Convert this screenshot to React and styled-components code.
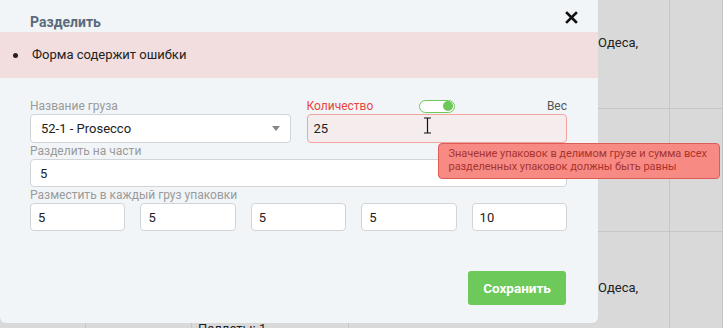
import React from 'react';
import styled, { createGlobalStyle } from 'styled-components';

const GlobalStyle = createGlobalStyle`
  html, body {
    margin: 0;
    padding: 0;
    overflow: hidden;
    background: #d9d9d9;
    font-family: Roboto, "Noto Sans", sans-serif;
  }
`;

const Page = styled.div`
  position: relative;
  width: 723px;
  height: 328px;
  overflow: hidden;
`;

/* table behind the dialog */
const Table = styled.div`
  display: grid;
  grid-template-columns: 86px 106px 157px 321px 1fr;
  grid-auto-rows: 123px;
  margin-top: -14px;
`;

const Cell = styled.div`
  border-right: 1px solid #c6c6c6;
  border-bottom: 1px solid #c6c6c6;
  padding: ${p => p.$pad || '0'};
  font-size: 13px;
  line-height: 16px;
  color: #222;
`;

const Modal = styled.div`
  position: absolute;
  left: 0;
  top: -4px;
  width: 598px;
  background: #f1f5f8;
  border-radius: 6px;
  padding-bottom: 18px;
`;

const Header = styled.div`
  height: 36px;
  box-sizing: border-box;
  padding: 18px 20px 0 30px;
  display: flex;
  justify-content: space-between;
  align-items: flex-start;
`;

const Title = styled.div`
  font-size: 14px;
  line-height: 16px;
  font-weight: 700;
  color: #5a6b7b;
`;

const Close = styled.button`
  border: 0;
  background: none;
  padding: 0;
  margin-top: -3px;
  width: 13px;
  height: 13px;
  display: flex;
  cursor: pointer;
`;

const Alert = styled.ul`
  margin: 0;
  height: 46px;
  padding: 0 0 0 13px;
  background: #f2dede;
  font-size: 13px;
  line-height: 46px;
  color: #222;
  list-style: none;
`;

const AlertItem = styled.li`
  display: flex;
  align-items: center;
  &::before {
    content: '';
    width: 5px;
    height: 5px;
    border-radius: 50%;
    background: #222;
    margin-right: 14px;
  }
`;

const Body = styled.div`
  padding: 20px 31px 0 30px;
`;

const TopRow = styled.div`
  display: grid;
  grid-template-columns: 1fr 1fr;
  column-gap: 16px;
`;

const Field = styled.div`
  position: relative;
`;

const Label = styled.div`
  font-size: 12px;
  line-height: 16px;
  color: ${p => (p.$error ? '#e8463c' : '#9a9a9a')};
  justify-self: ${p => (p.$end ? 'end' : 'start')};
  white-space: nowrap;
`;

const QtyLabelRow = styled.div`
  display: grid;
  grid-template-columns: 1fr auto 1fr;
  align-items: center;
  height: 16px;
`;

const ValueLabel = styled(Label)`
  color: #555;
`;

const Toggle = styled.div`
  width: 36px;
  height: 13px;
  box-sizing: border-box;
  border: 1.5px solid #6cc95a;
  border-radius: 7px;
  background: #fff;
  display: flex;
  align-items: center;
  justify-content: flex-end;
  padding-right: 1px;
  &::after {
    content: '';
    width: 10px;
    height: 10px;
    border-radius: 50%;
    background: #6cc95a;
  }
`;

const Box = styled.div`
  height: ${p => p.$h || 28}px;
  box-sizing: border-box;
  border: 1px solid ${p => (p.$error ? '#f3a39d' : '#d2d5d8')};
  background: ${p => (p.$error ? '#f5eded' : '#fff')};
  border-radius: 4px;
  padding: 0 ${p => p.$px || 8}px;
  display: flex;
  align-items: center;
  justify-content: space-between;
  font-size: 13px;
  color: #222;
`;

const Arrow = styled.span`
  width: 0;
  height: 0;
  border-left: 4.5px solid transparent;
  border-right: 4.5px solid transparent;
  border-top: 5px solid #888;
`;

const Cursor = styled.svg`
  position: absolute;
  left: 116px;
  top: 19px;
`;

const Tooltip = styled.div`
  position: absolute;
  left: 131px;
  top: 45px;
  width: 282px;
  height: 36px;
  box-sizing: border-box;
  padding: 3px 10px;
  background: #f88a84;
  border: 1px solid #de5a55;
  border-radius: 4px;
  font-size: 11px;
  line-height: 13px;
  letter-spacing: -0.05px;
  white-space: nowrap;
  color: #a8342e;
  z-index: 2;
`;

const Parts = styled.div`
  display: grid;
  grid-template-columns: repeat(5, 1fr);
  column-gap: 15px;
`;

const Footer = styled.div`
  display: flex;
  justify-content: flex-end;
  margin-top: 40px;
  padding-right: 1px;
`;

const SaveButton = styled.button`
  width: 98px;
  height: 34px;
  border: 0;
  border-radius: 3px;
  background: #6cc95a;
  color: #fff;
  font-family: Roboto, sans-serif;
  font-size: 13.5px;
  font-weight: 700;
  cursor: pointer;
`;

const parts = [5, 5, 5, 5, 10];

export default function App() {
  return (
    <Page>
      <GlobalStyle />
      <Table>
        <Cell /><Cell /><Cell />
        <Cell $pad="49px 0 0 249px">Одеса,</Cell>
        <Cell />
        <Cell /><Cell /><Cell /><Cell /><Cell />
        <Cell /><Cell /><Cell $pad="89px 0 0 6px">Паллеты: 1</Cell>
        <Cell $pad="48px 0 0 249px">Одеса,</Cell>
        <Cell />
      </Table>

      <Modal>
        <Header>
          <Title>Разделить</Title>
          <Close aria-label="close">
            <svg width="13" height="13" viewBox="0 0 13 13">
              <path d="M2 2 L11 11 M11 2 L2 11" stroke="#111" strokeWidth="2.6" strokeLinecap="square" />
            </svg>
          </Close>
        </Header>
        <Alert>
          <AlertItem>Форма содержит ошибки</AlertItem>
        </Alert>
        <Body>
          <TopRow>
            <Field>
              <Label>Название груза</Label>
              <Box $h={29} $px={10}>
                52-1 - Prosecco
                <Arrow />
              </Box>
            </Field>
            <Field>
              <QtyLabelRow>
                <Label $error>Количество</Label>
                <Toggle />
                <ValueLabel $end>Вес</ValueLabel>
              </QtyLabelRow>
              <Box $h={29} $px={6} $error>25</Box>
              <Cursor width="9" height="17" viewBox="0 0 9 17">
                <path d="M1 1 H8 M4.5 1 V16 M1 16 H8" stroke="#111" strokeWidth="1.2" fill="none" />
              </Cursor>
              <Tooltip>
                Значение упаковок в делимом грузе и сумма всех
                <br />
                разделенных упаковок должны быть равны
              </Tooltip>
            </Field>
          </TopRow>
          <Label>Разделить на части</Label>
          <Box $px={9}>5</Box>
          <Label>Разместить в каждый груз упаковки</Label>
          <Parts>
            {parts.map((n, i) => (
              <Box key={i} $px={7}>{n}</Box>
            ))}
          </Parts>
          <Footer>
            <SaveButton>Сохранить</SaveButton>
          </Footer>
        </Body>
      </Modal>
    </Page>
  );
}
